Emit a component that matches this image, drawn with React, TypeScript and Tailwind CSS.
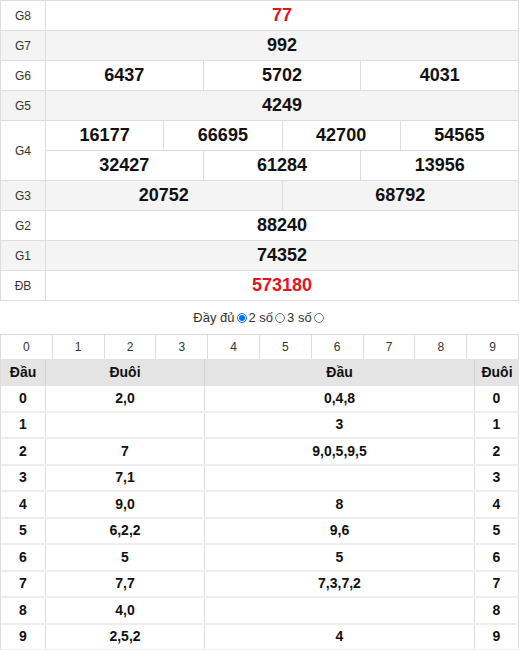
import React from "react"

const font = { fontFamily: '"Liberation Sans", Arial, sans-serif' }

type Prize = { label: string; rows: string[][]; red?: boolean; gray?: boolean }

const prizes: Prize[] = [
  { label: "G8", rows: [["77"]], red: true },
  { label: "G7", rows: [["992"]], gray: true },
  { label: "G6", rows: [["6437", "5702", "4031"]] },
  { label: "G5", rows: [["4249"]], gray: true },
  { label: "G4", rows: [["16177", "66695", "42700", "54565"], ["32427", "61284", "13956"]] },
  { label: "G3", rows: [["20752", "68792"]], gray: true },
  { label: "G2", rows: [["88240"]] },
  { label: "G1", rows: [["74352"]], gray: true },
  { label: "ĐB", rows: [["573180"]], red: true },
]

const loto = [
  ["0", "2,0", "0,4,8", "0"],
  ["1", "", "3", "1"],
  ["2", "7", "9,0,5,9,5", "2"],
  ["3", "7,1", "", "3"],
  ["4", "9,0", "8", "4"],
  ["5", "6,2,2", "9,6", "5"],
  ["6", "5", "5", "6"],
  ["7", "7,7", "7,3,7,2", "7"],
  ["8", "4,0", "", "8"],
  ["9", "2,5,2", "4", "9"],
]

function PrizeRow({ p }: { p: Prize }) {
  return (
    <div className={`flex border-b border-[#ddd] ${p.gray ? "bg-[#f4f4f4]" : "bg-white"}`}>
      <div className="w-[45px] shrink-0 border-r border-[#ddd] flex items-center justify-center text-[12px] text-[#333]">
        {p.label}
      </div>
      <div className="flex-1 flex flex-col">
        {p.rows.map((r, i) => (
          <div key={i} className={`flex ${i < p.rows.length - 1 ? "h-[30px] border-b border-[#ddd]" : "h-[29px]"}`}>
            {r.map((n, j) => (
              <div
                key={j}
                className={`flex-1 flex items-center justify-center text-[18px] font-bold ${j > 0 ? "border-l border-[#ddd]" : ""} ${p.red ? "text-[#e4151f]" : "text-[#111]"}`}
              >
                {n}
              </div>
            ))}
          </div>
        ))}
      </div>
    </div>
  )
}

export default function App() {
  return (
    <div className="w-[519px] bg-white" style={font}>
      <div className="border-t border-l border-r border-[#ddd]">
        {prizes.map((p) => (
          <PrizeRow key={p.label} p={p} />
        ))}
      </div>

      <div className="h-[33px] flex items-center justify-center text-[13px] text-[#333]">
        <span>Đầy đủ</span>
        <input type="radio" name="mode" defaultChecked className="mx-[2px] w-[10px] h-[10px]" />
        <span>2 số</span>
        <input type="radio" name="mode" className="mx-[2px] w-[10px] h-[10px]" />
        <span>3 số</span>
        <input type="radio" name="mode" className="mx-[2px] w-[10px] h-[10px]" />
      </div>

      <div className="flex h-[25px] border-t border-l border-[#ddd]">
        {Array.from({ length: 10 }, (_, i) => (
          <div key={i} className="flex-1 border-r border-[#ddd] flex items-center justify-center text-[12px] text-[#333]">
            {i}
          </div>
        ))}
      </div>

      <div className="border-l border-[#ddd] text-[14px] font-bold text-[#111]">
        <div className="flex h-[27px] bg-[#e4e4e4]">
          <div className="w-[45px] shrink-0 border-r border-[#d4d4d4] flex items-center justify-center">Đầu</div>
          <div className="w-[159px] shrink-0 border-r border-[#d4d4d4] flex items-center justify-center">Đuôi</div>
          <div className="w-[270px] shrink-0 border-r border-[#d4d4d4] flex items-center justify-center">Đầu</div>
          <div className="flex-1 flex items-center justify-center">Đuôi</div>
        </div>
        {loto.map((r) => (
          <div key={r[0]} className="flex h-[26.5px] border-b-2 border-[#eee]">
            <div className="w-[45px] shrink-0 border-r border-[#ddd] flex items-center justify-center">{r[0]}</div>
            <div className="w-[159px] shrink-0 border-r border-[#ddd] flex items-center justify-center">{r[1]}</div>
            <div className="w-[270px] shrink-0 border-r border-[#ddd] flex items-center justify-center">{r[2]}</div>
            <div className="flex-1 border-r border-[#ddd] flex items-center justify-center">{r[3]}</div>
          </div>
        ))}
      </div>
    </div>
  )
}
